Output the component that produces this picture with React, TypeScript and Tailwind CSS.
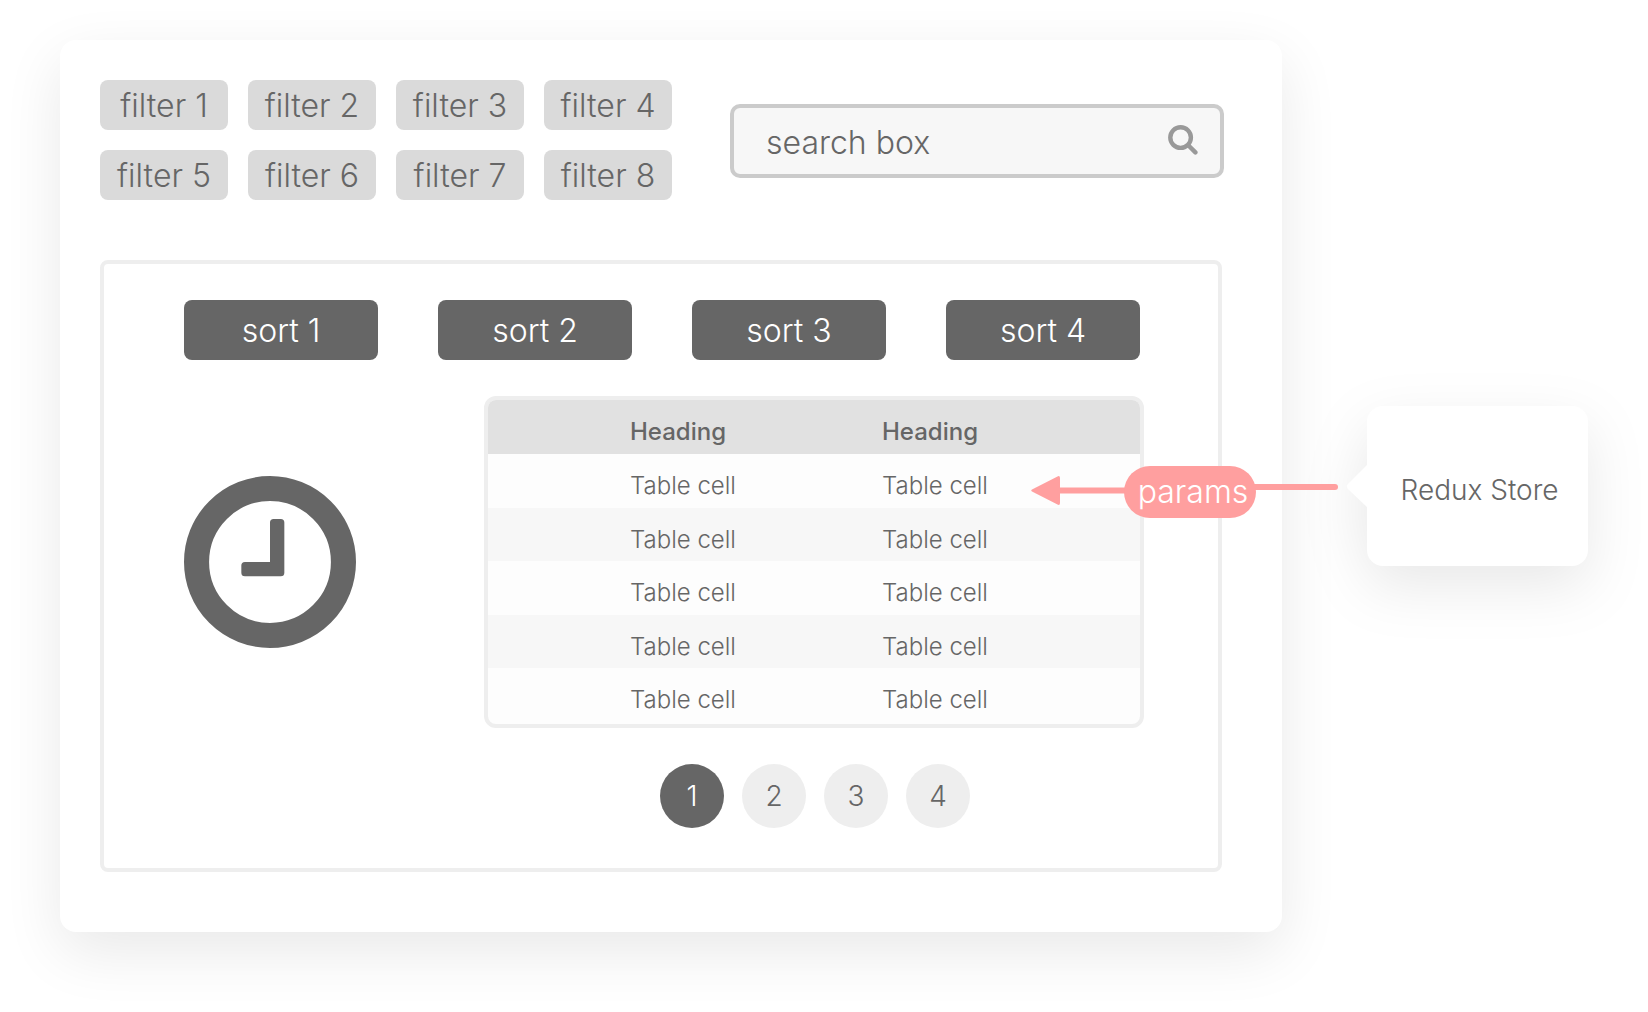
const filters = [1, 2, 3, 4, 5, 6, 7, 8];
const sorts = [1, 2, 3, 4];
const rows = [1, 2, 3, 4, 5];
const pages = [1, 2, 3, 4];

function SearchIcon() {
  return (
    <svg className="block size-[30px]" viewBox="0 0 30 30" fill="none" stroke="#999999" strokeWidth="4.4" strokeLinecap="round" aria-hidden="true">
      <circle cx="12.6" cy="12.6" r="10.3" />
      <path d="M20.5 20.5 27.4 27.4" />
    </svg>
  );
}

function ClockIcon() {
  return (
    <svg className="block size-[172px] shrink-0" viewBox="0 0 24 24" fill="#666666" aria-hidden="true">
      <circle cx="12" cy="12" r="10.25" fill="none" stroke="#666666" strokeWidth="3.5" />
      <path d="M14 6.5v7q0 .5-.5.5h-5q-.5 0-.5-.5v-1q0-.5.5-.5H12V6.5q0-.5.5-.5h1q.5 0 .5.5z" />
    </svg>
  );
}

function Header() {
  return (
    <header className="flex items-start gap-[58px]">
      <div className="grid grid-cols-4 gap-5">
        {filters.map((n) => (
          <button key={n} type="button" className="h-[50px] w-32 rounded-lg bg-[#dadada] pt-0.5 text-[32px] leading-[48px] whitespace-nowrap">
            filter {n}
          </button>
        ))}
      </div>
      <form role="search" className="mt-6 flex h-[74px] min-w-0 flex-1 items-center rounded-[10px] border-4 border-[#cbcbcb] bg-[#f7f7f7] pr-[22px] pl-8" onSubmit={(e) => e.preventDefault()}>
        <input type="text" aria-label="search box" placeholder="search box" className="h-full min-w-0 flex-1 bg-transparent pt-0.5 text-[32px] outline-none placeholder:text-[#666666]" />
        <button type="submit" aria-label="Search" className="mb-0.5">
          <SearchIcon />
        </button>
      </form>
    </header>
  );
}

function DataTable() {
  return (
    <div className="min-w-0 flex-1 overflow-hidden rounded-xl border-4 border-[#eeeeee] bg-[#fdfdfd] pb-0.5">
      <table className="w-full table-fixed text-left text-2xl">
        <colgroup>
          <col className="w-[142px]" />
          <col className="w-[252px]" />
          <col />
        </colgroup>
        <thead>
          <tr className="h-[54px] bg-[#e1e1e1]">
            <td />
            <th scope="col" className="pt-2.5 leading-8 font-medium">Heading</th>
            <th scope="col" className="pt-2.5 leading-8 font-medium">Heading</th>
          </tr>
        </thead>
        <tbody>
          {rows.map((r) => (
            <tr key={r} className="h-[54px] even:h-[53px] even:bg-[#f7f7f7]">
              <td />
              <td className="pt-2.5 leading-8">Table cell</td>
              <td className="pt-2.5 leading-8">Table cell</td>
            </tr>
          ))}
        </tbody>
      </table>
    </div>
  );
}

function ResultsPanel() {
  return (
    <section className="mt-[60px] mr-0.5 rounded-lg border-4 border-[#eeeeee] pt-9 pr-[74px] pb-10 pl-20">
      <div className="mr-1 grid grid-cols-4 gap-[60px]">
        {sorts.map((n) => (
          <button key={n} type="button" className="h-[60px] rounded-lg bg-[#666666] pt-0.5 text-[32px] leading-[58px] text-white">
            sort {n}
          </button>
        ))}
      </div>
      <div className="mt-9 flex items-center gap-32">
        <ClockIcon />
        <DataTable />
      </div>
      <nav aria-label="Pages" className="mt-9 flex justify-center gap-[18px] pl-[302px]">
        {pages.map((n) => (
          <button
            key={n}
            type="button"
            aria-current={n === 1 ? "page" : undefined}
            className="size-16 rounded-full bg-[#eeeeee] text-[28px] leading-[64px] aria-[current=page]:bg-[#666666] aria-[current=page]:text-white"
          >
            {n}
          </button>
        ))}
      </nav>
    </section>
  );
}

function ParamsConnector() {
  return (
    <div className="absolute top-[60px] right-full mr-[29px] flex">
      <svg className="-mr-1 h-[52px] w-[97px]" viewBox="0 0 97 52" fill="#ff9f9f" aria-hidden="true">
        <path d="M1 23.6 26.5 10.4Q29 9.400 29 12V21.500H97V27.500H29V37Q29 39.600 26.500 38.600L1 25.400Q-.5 24.500 1 23.600Z" />
      </svg>
      <span className="relative flex h-[52px] w-[132px] items-center justify-center rounded-full bg-[#ff9f9f] pl-1.5 text-[32px] text-white">params</span>
      <svg className="-ml-1 h-[52px] w-[86px]" viewBox="0 0 86 52" fill="none" stroke="#ff9f9f" strokeWidth="6" strokeLinecap="round" aria-hidden="true">
        <path d="M0 21H83" />
      </svg>
    </div>
  );
}

function StoreCard() {
  return (
    <aside className="relative flex h-40 w-[221px] shrink-0 items-center justify-center pt-2 pl-1 text-[28px]">
      <svg className="absolute inset-y-0 right-0 h-40 w-[242px] overflow-visible drop-shadow-[0_20px_28px_rgba(0,0,0,0.09)]" viewBox="0 0 242 160" fill="#ffffff" aria-hidden="true">
        <path d="M37 0H226a16 16 0 0 1 16 16V144a16 16 0 0 1-16 16H37a16 16 0 0 1-16-16V101L1.500 82.500Q0 80 1.500 78.500L21 59V16A16 16 0 0 1 37 0Z" />
      </svg>
      <span className="relative whitespace-nowrap">Redux Store</span>
      <ParamsConnector />
    </aside>
  );
}

export default function App() {
  return (
    <div className="flex min-h-screen items-start overflow-hidden bg-white px-[60px] pt-10 pb-20 font-['Inter','Liberation_Sans',sans-serif] font-light text-[#666666]">
      <div className="flex flex-1 items-center gap-[85px]">
        <main className="min-w-0 flex-1 rounded-2xl bg-white pt-10 pr-[58px] pb-[60px] pl-10 shadow-[0_20px_60px_rgba(0,0,0,0.09)]">
          <Header />
          <ResultsPanel />
        </main>
        <StoreCard />
      </div>
    </div>
  );
}
